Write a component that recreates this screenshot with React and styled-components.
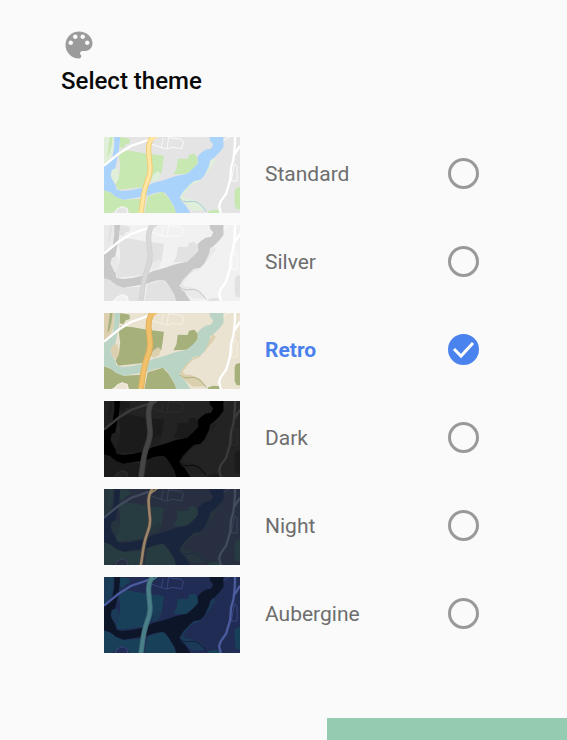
import { useState } from "react";
import styled, { createGlobalStyle } from "styled-components";

const GlobalStyle = createGlobalStyle`
  * {
    box-sizing: border-box;
  }

  body {
    margin: 0;
    background-color: #fafafa;
    font-family: Roboto, "Liberation Sans", sans-serif;
  }
`;

const StyledPage = styled.div`
  min-height: 100vh;
  display: flex;
  flex-direction: column;
  justify-content: space-between;
`;

const StyledMain = styled.main`
  padding: 27px 88px 64px 61px;
`;

const StyledHeader = styled.header`
  display: flex;
  flex-direction: column;
  gap: 4px;
`;

const StyledPalette = styled.svg`
  width: 36px;
  height: 36px;
  fill: #9b9b9b;
`;

const H1 = styled.h1`
  margin: 0;
  font-size: 24px;
  font-weight: 500;
  line-height: 28px;
  color: #0a0a0a;
`;

const StyledList = styled.div`
  margin: 42px 0 0 43px;
  display: flex;
  flex-direction: column;
  gap: 12px;
`;

const StyledRow = styled.label`
  display: flex;
  align-items: center;
  gap: 25px;
  cursor: pointer;
`;

const StyledMap = styled.svg`
  display: block;
  flex: none;
  width: 136px;
  height: 76px;
  fill: none;
`;

const StyledName = styled.span`
  flex: 1;
  padding-bottom: 2px;
  font-size: 21px;
  line-height: 28px;
  font-weight: ${(props) => (props.$active ? 700 : 400)};
  color: ${(props) => (props.$active ? "#4a80ec" : "#6e6e6e")};
`;

const StyledRadioBox = styled.span`
  display: grid;
  place-items: center;
  padding-bottom: 4px;

  & > * {
    grid-area: 1 / 1;
  }
`;

const StyledRadio = styled.input`
  appearance: none;
  margin: 0;
  width: 31px;
  height: 31px;
  border: 3px solid #999;
  border-radius: 50%;
  cursor: pointer;

  &:checked {
    border-color: #4a83ee;
    background-color: #4a83ee;
  }
`;

const StyledCheck = styled.svg`
  width: 31px;
  height: 31px;
  fill: none;
  stroke: #fff;
  stroke-width: 3;
  pointer-events: none;
`;

const StyledBar = styled.div`
  align-self: flex-end;
  width: 42.3%;
  height: 22px;
  background-color: #94cbb1;
`;

const themes = [
  {
    name: "Standard",
    land: "#e4e4e4",
    park: "#c8e8b1",
    shore: "#e0efd9",
    water: "#a9d3fb",
    creek: "#a3c9dd",
    road: "#ffffff",
    street: "#fafafa",
    edge: "#f2cd77",
    highway: "#ffe7a3",
    highwayWidth: 16,
  },
  {
    name: "Silver",
    land: "#f1f1f1",
    park: "#e2e2e2",
    shore: "#e9e9e9",
    water: "#c8c8c8",
    creek: "#c4c4c4",
    road: "#ffffff",
    street: "#fafafa",
    edge: "#d2d2d2",
    highway: "#d8d8d8",
    highwayWidth: 16,
  },
  {
    name: "Retro",
    land: "#eae3d1",
    park: "#a6b07b",
    shore: "#dccfae",
    water: "#b9d3c4",
    creek: "#a6b07b",
    road: "#ffffff",
    street: "#f5f0e4",
    edge: "#e6b057",
    highway: "#f0c06a",
    highwayWidth: 18,
  },
  {
    name: "Dark",
    land: "#232323",
    park: "#1b1b1b",
    shore: "#202020",
    water: "#000000",
    creek: "#080808",
    road: "#3b3b3b",
    street: "#2d2d2d",
    edge: "#3f3f3f",
    highway: "#464646",
    highwayWidth: 17,
  },
  {
    name: "Night",
    land: "#282f40",
    park: "#273c40",
    shore: "#27353f",
    water: "#18253c",
    creek: "#1d2c40",
    road: "#424b5e",
    street: "#39435a",
    edge: "#37383e",
    highway: "#9c8468",
    highwayWidth: 14,
  },
  {
    name: "Aubergine",
    land: "#212c54",
    park: "#194059",
    shore: "#1b3a58",
    water: "#0d1629",
    creek: "#111d38",
    road: "#4a5c9e",
    street: "#37467c",
    edge: "#3c6b7a",
    highway: "#4b8088",
    highwayWidth: 16,
  },
];

function MapPreview({ colors }) {
  return (
    <StyledMap viewBox="17 20 411 228" preserveAspectRatio="none" aria-hidden="true">
      <path fill={colors.land} d="M17 20h411v228H17z" />
      {/* shores */}
      <path
        fill={colors.shore}
        d="M17 20H48L46 58 38 84 17 106ZM346 83l9 9-11 16-10 12-14 17 9-26ZM37 120l20-8 6 30-9 20-14-16ZM246 200l18-27 27-21 22-4-12 8-14 4-14 12-18 24 6 8 22 3 26 12 16 20-40 2-28-24ZM160 150l8-20 12-8 8 10-4 14-16 8Z"
      />
      {/* parks */}
      <path
        fill={colors.park}
        d="M66 60l34 2 48 8 50 6-3 26-5 30-10-10-15 12-6 16-23 20-76 8-8-14 10-20 4-36-4-28ZM240 85l30 1 4-13 16-3 10 12v16l-14 18-20 14-39 2 9-18ZM17 180l22 8 16 12 22 8 54-3-8 43H93l-5-16-18-3-15 9-15 10H17ZM149 198l46-14 18 20 16 26 7 18h-97ZM428 170l-12 3-4 10v42l6 12h10ZM330 244l16-6 22 2 4 8h-40ZM66 20l28 5 1 13-12 4-8 12-11-4ZM35 20l8 0-4 30-6 22-6 8Z"
      />
      {/* river */}
      <path
        fill={colors.water}
        d="M48 20H66L62 60 55 95 51 114 40 120 37 136 43 150 52 165 55 178 72 182 102 179 140 171 165 158 200 149 235 137 268 130 288 113 302 97 300 78 310 68 324 58 341 55 347 42 338 32 336 20H378V50L364 68 349 82 338 90 334 108 320 136 308 148 288 152 273 166 256 184 245 202 250 213 261 222 270 235 278 248H235L230 230 215 205 203 189 193 184 170 188 145 197 108 203 76 208 54 200 36 186 17 180V106L30 95 43 79 48 50Z"
      />
      <path
        stroke={colors.creek}
        strokeWidth="3"
        d="M246 206q10 10 24 9c20-6 34 2 44 14l12 14"
      />
      {/* streets */}
      <path
        stroke={colors.street}
        strokeWidth="3"
        d="M162 42l28 10 18 4 14-5 30 4 5-20-6-8-38-5M196 24l-6 28M212 21l-4 35M378 30l18-10M412 100l7 8v44h-17l4-26ZM51 248l5-12 16-7 14 6 2 13"
      />
      <path
        stroke={colors.road}
        strokeWidth="7"
        d="M17 106L60 71 98 47 156 27M413 20l-1 32-4 36-7 24-3 38-12 40-17 24-4 14 5 20M428 46l-16 26"
      />
      {/* highway */}
      <path
        stroke={colors.edge}
        strokeWidth={colors.highwayWidth}
        d="M164 18q-14 20-12 46t4 44-8 44-15 66-8 34"
      />
      <path
        stroke={colors.highway}
        strokeWidth={colors.highwayWidth - 6}
        d="M164 18q-14 20-12 46t4 44-8 44-15 66-8 34"
      />
      <path stroke={colors.highway} strokeWidth="5" d="M158 33l20-14" />
    </StyledMap>
  );
}

function ThemeRow({ theme, active, onSelect }) {
  return (
    <StyledRow>
      <MapPreview colors={theme} />
      <StyledName $active={active}>{theme.name}</StyledName>
      <StyledRadioBox>
        <StyledRadio
          type="radio"
          name="theme"
          value={theme.name}
          checked={active}
          onChange={() => onSelect(theme.name)}
        />
        {active && (
          <StyledCheck viewBox="0 0 31 31" aria-hidden="true">
            <path d="M6 15l7 7L25 9" />
          </StyledCheck>
        )}
      </StyledRadioBox>
    </StyledRow>
  );
}

function App() {
  const [selected, setSelected] = useState("Retro");

  return (
    <StyledPage>
      <GlobalStyle />
      <StyledMain>
        <StyledHeader>
          <StyledPalette viewBox="0 0 24 24" aria-hidden="true">
            <path d="M12 3c-4.97 0-9 4.03-9 9s4.03 9 9 9c.83 0 1.5-.67 1.5-1.5 0-.39-.15-.74-.39-1.01-.23-.26-.38-.61-.38-.99 0-.83.67-1.5 1.5-1.5H16c2.76 0 5-2.24 5-5 0-4.42-4.03-8-9-8zm-5.5 9c-.83 0-1.5-.67-1.5-1.5S5.67 9 6.5 9 8 9.67 8 10.5 7.33 12 6.5 12zm3-4C8.67 8 8 7.33 8 6.5S8.67 5 9.5 5s1.500.67 1.500 1.500S10.330 8 9.500 8zm5 0c-.83 0-1.500-.67-1.500-1.500S13.670 5 14.500 5s1.500.67 1.500 1.500S15.330 8 14.500 8zm3 4c-.83 0-1.500-.67-1.500-1.500S16.670 9 17.500 9s1.500.67 1.500 1.500-.67 1.500-1.500 1.500z" />
          </StyledPalette>
          <H1 id="theme-title">Select theme</H1>
        </StyledHeader>
        <StyledList role="radiogroup" aria-labelledby="theme-title">
          {themes.map((theme) => (
            <ThemeRow
              key={theme.name}
              theme={theme}
              active={theme.name === selected}
              onSelect={setSelected}
            />
          ))}
        </StyledList>
      </StyledMain>
      <StyledBar />
    </StyledPage>
  );
}

export default App;
